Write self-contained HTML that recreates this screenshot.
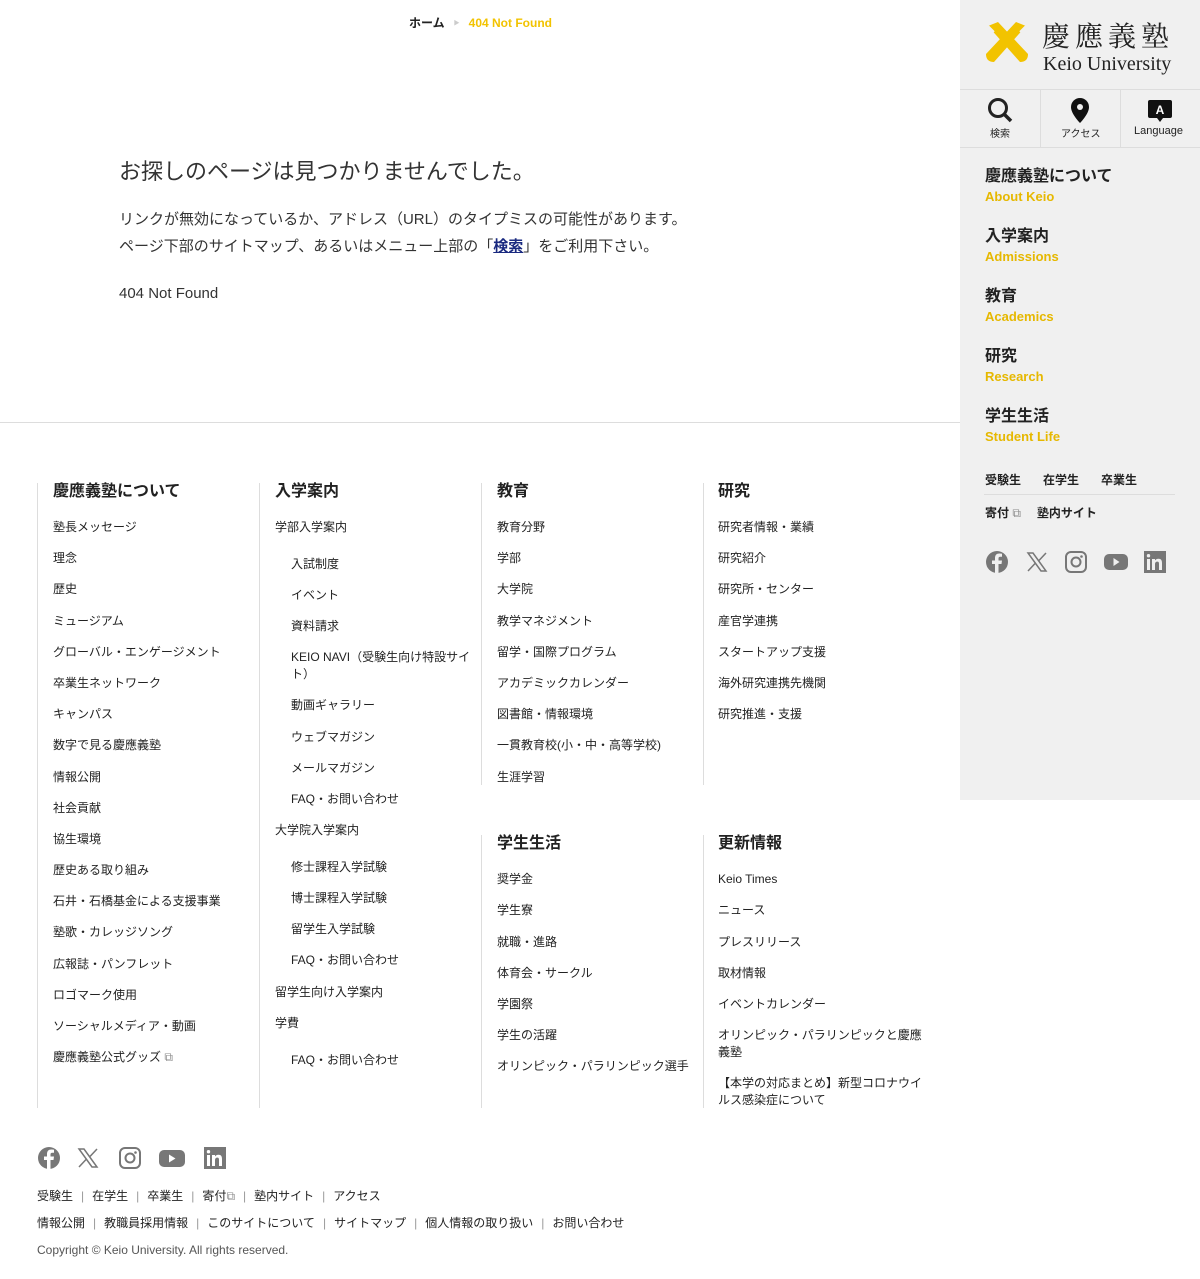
<!DOCTYPE html>
<html><head><meta charset="utf-8"><style>
*{margin:0;padding:0;box-sizing:border-box}
body{width:1200px;height:1279px;position:relative;background:#fff;font-family:"Liberation Sans","Noto Sans CJK JP",sans-serif;color:#222;overflow:hidden}
.a{position:absolute;white-space:nowrap}
.i{position:absolute;font-size:12px;line-height:17px;color:#222;margin-top:1px}
.h{position:absolute;font-size:16px;font-weight:bold;line-height:20px}
.vl{position:absolute;width:1px;background:#ddd}
.side{position:absolute;left:960px;top:0;width:240px;height:800px;background:#f0f0f0}
.nav .j{position:absolute;left:25px;font-size:16px;font-weight:bold;line-height:20px}
.nav .e{position:absolute;left:25px;font-size:13px;font-weight:bold;color:#e6b800;line-height:16px}
.s{color:#999;margin:0 8px}
</style></head><body>
<div class="a" style="left:409px;top:14px;font-size:12px;font-weight:bold;">ホーム<span style="color:#ccc;font-size:6px;margin:0 9px;vertical-align:2px">▶</span><span style="color:#f2c300">404 Not Found</span></div>
<div class="a" style="left:119px;top:154px;font-size:22px;color:#333">お探しのページは見つかりませんでした。</div>
<div class="a" style="left:119px;top:206px;font-size:15px;line-height:27px;color:#333">リンクが無効になっているか、アドレス（URL）のタイプミスの可能性があります。<br>ページ下部のサイトマップ、あるいはメニュー上部の「<b style="color:#1a2a80;text-decoration:underline">検索</b>」をご利用下さい。</div>
<div class="a" style="left:119px;top:285px;font-size:15px;color:#333">404 Not Found</div>
<div class="a" style="left:0;top:422px;width:960px;height:1px;background:#ddd"></div>

<div class="vl" style="left:37px;top:483px;height:625px"></div>
<div class="vl" style="left:259px;top:483px;height:625px"></div>
<div class="vl" style="left:481px;top:483px;height:302px"></div>
<div class="vl" style="left:703px;top:483px;height:302px"></div>
<div class="vl" style="left:481px;top:835px;height:273px"></div>
<div class="vl" style="left:703px;top:835px;height:273px"></div>

<div class="h" style="left:53px;top:482px">慶應義塾について</div>
<div class="h" style="left:275px;top:482px">入学案内</div>
<div class="h" style="left:497px;top:482px">教育</div>
<div class="h" style="left:718px;top:482px">研究</div>
<div class="h" style="left:497px;top:834px">学生生活</div>
<div class="h" style="left:718px;top:834px">更新情報</div>

<div class="i" style="left:53px;top:518px">塾長メッセージ</div>
<div class="i" style="left:53px;top:549px">理念</div>
<div class="i" style="left:53px;top:580px">歴史</div>
<div class="i" style="left:53px;top:612px">ミュージアム</div>
<div class="i" style="left:53px;top:643px">グローバル・エンゲージメント</div>
<div class="i" style="left:53px;top:674px">卒業生ネットワーク</div>
<div class="i" style="left:53px;top:705px">キャンパス</div>
<div class="i" style="left:53px;top:736px">数字で見る慶應義塾</div>
<div class="i" style="left:53px;top:768px">情報公開</div>
<div class="i" style="left:53px;top:799px">社会貢献</div>
<div class="i" style="left:53px;top:830px">協生環境</div>
<div class="i" style="left:53px;top:861px">歴史ある取り組み</div>
<div class="i" style="left:53px;top:892px">石井・石橋基金による支援事業</div>
<div class="i" style="left:53px;top:923px">塾歌・カレッジソング</div>
<div class="i" style="left:53px;top:955px">広報誌・パンフレット</div>
<div class="i" style="left:53px;top:986px">ロゴマーク使用</div>
<div class="i" style="left:53px;top:1017px">ソーシャルメディア・動画</div>
<div class="i" style="left:53px;top:1048px">慶應義塾公式グッズ <span style="color:#888">⧉</span></div>

<div class="i" style="left:275px;top:518px">学部入学案内</div>
<div class="i" style="left:291px;top:555px">入試制度</div>
<div class="i" style="left:291px;top:586px">イベント</div>
<div class="i" style="left:291px;top:617px">資料請求</div>
<div class="i" style="left:291px;top:648px;white-space:normal;width:180px">KEIO NAVI（受験生向け特設サイト）</div>
<div class="i" style="left:291px;top:696px">動画ギャラリー</div>
<div class="i" style="left:291px;top:728px">ウェブマガジン</div>
<div class="i" style="left:291px;top:759px">メールマガジン</div>
<div class="i" style="left:291px;top:790px">FAQ・お問い合わせ</div>
<div class="i" style="left:275px;top:821px">大学院入学案内</div>
<div class="i" style="left:291px;top:858px">修士課程入学試験</div>
<div class="i" style="left:291px;top:889px">博士課程入学試験</div>
<div class="i" style="left:291px;top:920px">留学生入学試験</div>
<div class="i" style="left:291px;top:951px">FAQ・お問い合わせ</div>
<div class="i" style="left:275px;top:983px">留学生向け入学案内</div>
<div class="i" style="left:275px;top:1014px">学費</div>
<div class="i" style="left:291px;top:1051px">FAQ・お問い合わせ</div>

<div class="i" style="left:497px;top:518px">教育分野</div>
<div class="i" style="left:497px;top:549px">学部</div>
<div class="i" style="left:497px;top:580px">大学院</div>
<div class="i" style="left:497px;top:612px">教学マネジメント</div>
<div class="i" style="left:497px;top:643px">留学・国際プログラム</div>
<div class="i" style="left:497px;top:674px">アカデミックカレンダー</div>
<div class="i" style="left:497px;top:705px">図書館・情報環境</div>
<div class="i" style="left:497px;top:736px">一貫教育校(小・中・高等学校)</div>
<div class="i" style="left:497px;top:768px">生涯学習</div>
<div class="i" style="left:497px;top:870px">奨学金</div>
<div class="i" style="left:497px;top:901px">学生寮</div>
<div class="i" style="left:497px;top:933px">就職・進路</div>
<div class="i" style="left:497px;top:964px">体育会・サークル</div>
<div class="i" style="left:497px;top:995px">学園祭</div>
<div class="i" style="left:497px;top:1026px">学生の活躍</div>
<div class="i" style="left:497px;top:1057px">オリンピック・パラリンピック選手</div>

<div class="i" style="left:718px;top:518px">研究者情報・業績</div>
<div class="i" style="left:718px;top:549px">研究紹介</div>
<div class="i" style="left:718px;top:580px">研究所・センター</div>
<div class="i" style="left:718px;top:612px">産官学連携</div>
<div class="i" style="left:718px;top:643px">スタートアップ支援</div>
<div class="i" style="left:718px;top:674px">海外研究連携先機関</div>
<div class="i" style="left:718px;top:705px">研究推進・支援</div>
<div class="i" style="left:718px;top:870px">Keio Times</div>
<div class="i" style="left:718px;top:901px">ニュース</div>
<div class="i" style="left:718px;top:933px">プレスリリース</div>
<div class="i" style="left:718px;top:964px">取材情報</div>
<div class="i" style="left:718px;top:995px">イベントカレンダー</div>
<div class="i" style="left:718px;top:1026px;white-space:normal;width:210px">オリンピック・パラリンピックと慶應義塾</div>
<div class="i" style="left:718px;top:1074px;white-space:normal;width:210px">【本学の対応まとめ】新型コロナウイルス感染症について</div>

<svg class="a" style="left:37px;top:1146px" width="200" height="24" viewBox="0 0 200 24" fill="#777">
<circle cx="12" cy="12" r="11"/><path d="M13.5 23V14h3l.5-3.5h-3.5V8.5c0-1 .4-1.7 1.8-1.7H17V3.7c-.4 0-1.5-.2-2.7-.2-2.7 0-4.3 1.6-4.3 4.5v2.5H7V14h3v9z" fill="#fff"/>
<path d="M42 3h5l13 18h-5z M42 21l7.5-8 M60 3l-7.5 8" stroke="#777" stroke-width="1.5" fill="none"/>
<rect x="83" y="2" width="20" height="20" rx="5" fill="none" stroke="#777" stroke-width="2"/><circle cx="93" cy="12" r="4.5" fill="none" stroke="#777" stroke-width="2"/><circle cx="98.5" cy="6.5" r="1.3"/>
<rect x="122" y="4" width="26" height="17" rx="5"/><path d="M132 8.5v8l6.5-4z" fill="#fff"/>
<rect x="167" y="1" width="22" height="22"/><path d="M170 9h3v11h-3zM171.5 4a1.7 1.7 0 1 1 0 3.4 1.7 1.7 0 0 1 0-3.4zM175 9h3v1.5c.6-1 1.8-1.8 3.5-1.8 3 0 3.5 2 3.5 4.5V20h-3v-6c0-1.4-.3-2.4-1.7-2.4-1.6 0-2.3 1-2.3 2.6V20h-3z" fill="#fff"/>
</svg>
<div class="a" style="left:37px;top:1188px;font-size:12px;line-height:17px">受験生<span class="s">|</span>在学生<span class="s">|</span>卒業生<span class="s">|</span>寄付<span style="color:#888">⧉</span><span class="s">|</span>塾内サイト<span class="s">|</span>アクセス</div>
<div class="a" style="left:37px;top:1215px;font-size:12px;line-height:17px">情報公開<span class="s">|</span>教職員採用情報<span class="s">|</span>このサイトについて<span class="s">|</span>サイトマップ<span class="s">|</span>個人情報の取り扱い<span class="s">|</span>お問い合わせ</div>
<div class="a" style="left:37px;top:1243px;font-size:12px;color:#555">Copyright © Keio University. All rights reserved.</div>

<div class="side">
<svg class="a" style="left:24px;top:20px" width="46" height="46" viewBox="0 0 46 46">
<path d="M4 6 L14 2 L44 34 Q44 42 36 42 Z" fill="#f2c300"/>
<path d="M42 6 L32 2 L2 34 Q2 42 10 42 Z" fill="#f2c300"/>
<path d="M4 6 L10 12 M42 6 L36 12" stroke="#f0f0f0" stroke-width="2"/>
</svg>
<div class="a" style="left:82px;top:17px;font-family:'Noto Serif CJK SC','Liberation Serif',serif;font-size:28px;letter-spacing:5px;line-height:36px">慶應義塾</div>
<div class="a" style="left:83px;top:52px;font-family:'Liberation Serif',serif;font-size:20px;line-height:24px">Keio University</div>
<div class="a" style="left:0;top:89px;width:240px;height:1px;background:#ddd"></div>
<div class="a" style="left:80px;top:89px;width:1px;height:58px;background:#ddd"></div>
<div class="a" style="left:160px;top:89px;width:1px;height:58px;background:#ddd"></div>
<div class="a" style="left:0;top:147px;width:240px;height:1px;background:#ddd"></div>
<svg class="a" style="left:26px;top:96px" width="28" height="28" viewBox="0 0 28 28"><circle cx="12" cy="12" r="8.5" fill="none" stroke="#222" stroke-width="3"/><path d="M18 18l7 7" stroke="#222" stroke-width="3.5"/></svg>
<div class="a" style="left:30px;top:125px;font-size:10px">検索</div>
<svg class="a" style="left:108px;top:97px" width="24" height="28" viewBox="0 0 24 28"><path d="M12 1a9 9 0 0 0-9 9c0 7 9 16 9 16s9-9 9-16a9 9 0 0 0-9-9z" fill="#111"/><circle cx="12" cy="10" r="3" fill="#f0f0f0"/></svg>
<div class="a" style="left:101px;top:125px;font-size:10px">アクセス</div>
<svg class="a" style="left:187px;top:99px" width="26" height="24" viewBox="0 0 26 24"><path d="M3 1h20a2 2 0 0 1 2 2v14a2 2 0 0 1-2 2h-7l-3 4-3-4H3a2 2 0 0 1-2-2V3a2 2 0 0 1 2-2z" fill="#111"/><text x="13" y="15" font-size="12" font-weight="bold" fill="#fff" text-anchor="middle" font-family="Liberation Sans">A</text></svg>
<div class="a" style="left:174px;top:125px;font-size:11px">Language</div>
<div class="nav">
<div class="j" style="top:167px">慶應義塾について</div><div class="e" style="top:189px">About Keio</div>
<div class="j" style="top:227px">入学案内</div><div class="e" style="top:249px">Admissions</div>
<div class="j" style="top:287px">教育</div><div class="e" style="top:309px">Academics</div>
<div class="j" style="top:347px">研究</div><div class="e" style="top:369px">Research</div>
<div class="j" style="top:407px">学生生活</div><div class="e" style="top:429px">Student Life</div>
</div>
<div class="a" style="left:25px;top:471px;font-size:12px;font-weight:bold;word-spacing:0">受験生<span style="margin-left:22px">在学生</span><span style="margin-left:22px">卒業生</span></div>
<div class="a" style="left:24px;top:494px;width:191px;height:1px;background:#ddd"></div>
<div class="a" style="left:25px;top:504px;font-size:12px;font-weight:bold">寄付 <span style="color:#888;font-weight:normal">⧉</span><span style="margin-left:16px">塾内サイト</span></div>
<svg class="a" style="left:25px;top:550px" width="190" height="24" viewBox="0 0 190 24" fill="#777">
<circle cx="12" cy="12" r="11"/><path d="M13.5 23V14h3l.5-3.5h-3.5V8.5c0-1 .4-1.7 1.8-1.7H17V3.7c-.4 0-1.5-.2-2.7-.2-2.7 0-4.3 1.6-4.3 4.5v2.5H7V14h3v9z" fill="#f0f0f0"/>
<path d="M43 3h5l13 18h-5z M43 21l7.5-8 M61 3l-7.5 8" stroke="#777" stroke-width="1.5" fill="none"/>
<rect x="81" y="2" width="20" height="20" rx="5" fill="none" stroke="#777" stroke-width="2"/><circle cx="91" cy="12" r="4.5" fill="none" stroke="#777" stroke-width="2"/><circle cx="96.5" cy="6.5" r="1.3"/>
<rect x="119" y="4" width="24" height="16" rx="5"/><path d="M128.5 8v8l6-4z" fill="#f0f0f0"/>
<rect x="159" y="1" width="22" height="22"/><path d="M162 9h3v11h-3zM163.5 4a1.7 1.7 0 1 1 0 3.4 1.7 1.7 0 0 1 0-3.4zM167 9h3v1.5c.6-1 1.8-1.8 3.5-1.8 3 0 3.5 2 3.5 4.5V20h-3v-6c0-1.4-.3-2.4-1.7-2.4-1.6 0-2.3 1-2.3 2.6V20h-3z" fill="#f0f0f0"/>
</svg>
</div>
</body></html>
